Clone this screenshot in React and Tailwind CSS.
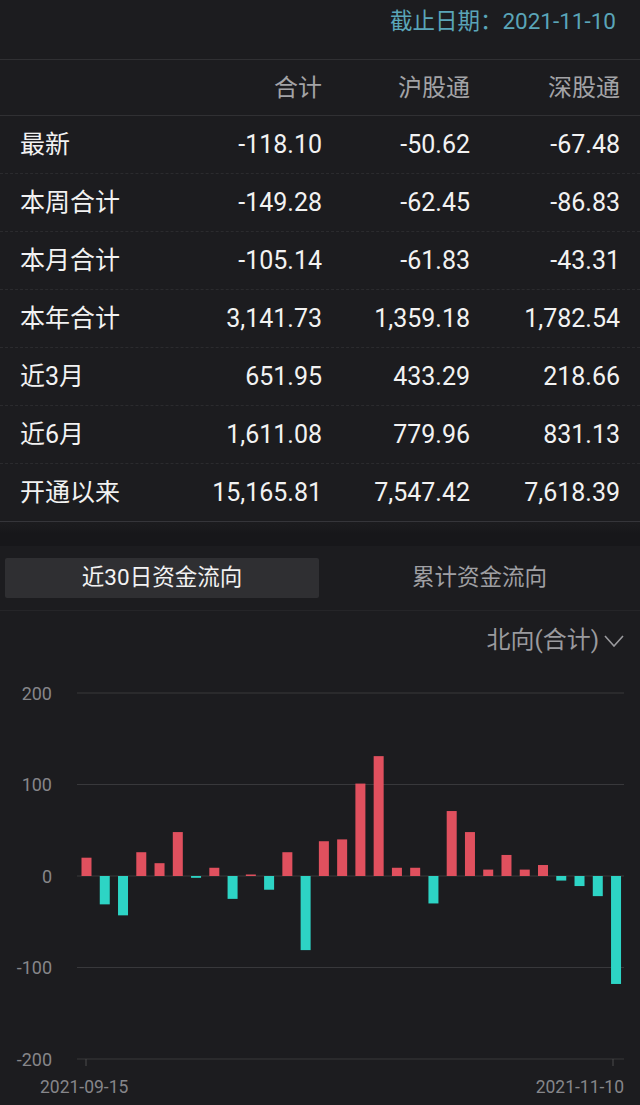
const rows = [
  ['最新', '-118.10', '-50.62', '-67.48'],
  ['本周合计', '-149.28', '-62.45', '-86.83'],
  ['本月合计', '-105.14', '-61.83', '-43.31'],
  ['本年合计', '3,141.73', '1,359.18', '1,782.54'],
  ['近3月', '651.95', '433.29', '218.66'],
  ['近6月', '1,611.08', '779.96', '831.13'],
  ['开通以来', '15,165.81', '7,547.42', '7,618.39'],
];

const flows = [
  20, -31, -43, 26, 14, 48, -2, 9, -25, 1, -15, 26, -81, 38, 40, 101, 131, 9, 9, -30,
  71, 48, 7, 23, 7, 12, -5, -11, -22, -118,
];

const font = { fontFamily: 'Roboto, "Noto Sans CJK SC", sans-serif' };

function FlowChart() {
  const zero = 206;
  const k = 0.915;
  const grid = [
    [200, 23],
    [100, 114.5],
    [0, 206],
    [-100, 297.5],
    [-200, 389],
  ];

  return (
    <svg width="640" height="435" viewBox="0 0 640 435" className="block">
      {grid.map(([label, y]) => (
        <g key={label}>
          <line x1="77" x2="624" y1={y} y2={y} stroke="#38383b" strokeWidth="1.2" />
          <text
            x="52"
            y={y}
            textAnchor="end"
            dominantBaseline="central"
            fill="#86868a"
            fontSize="18"
            style={font}
          >
            {label}
          </text>
        </g>
      ))}
      {flows.map((v, i) => {
        const cx = 86.5 + i * 18.26;
        const h = Math.max(Math.abs(v) * k, 1.5);
        const y = v >= 0 ? zero - h : zero;
        return (
          <rect
            key={i}
            x={cx - 5}
            y={y}
            width="10"
            height={h}
            fill={v >= 0 ? '#e0505e' : '#2dd4c5'}
          />
        );
      })}
      <line x1="86" x2="86" y1="389" y2="396" stroke="#4a4a4d" />
      <line x1="613" x2="613" y1="389" y2="396" stroke="#4a4a4d" />
      <text x="40" y="417" fill="#86868a" fontSize="17.5" style={font} dominantBaseline="central">
        2021-09-15
      </text>
      <text
        x="624"
        y="417"
        textAnchor="end"
        fill="#86868a"
        fontSize="17.5"
        style={font}
        dominantBaseline="central"
      >
        2021-11-10
      </text>
    </svg>
  );
}

export default function App() {
  return (
    <div className="w-[640px] h-[1105px] bg-[#1c1c1f] overflow-hidden" style={font}>
      {/* date */}
      <div className="h-[60px] flex items-center justify-end pr-[24px] pb-[15px] border-b border-[#303033]">
        <span className="text-[22.5px] text-[#5aa5b8]">截止日期：2021-11-10</span>
      </div>

      {/* table header */}
      <div className="h-[56px] grid grid-cols-[1fr_154px_148px_150px] items-center pl-[20px] pr-[20px] border-b border-[#303033] text-[24px] text-[#a3a3a6]">
        <span />
        <span className="text-right">合计</span>
        <span className="text-right">沪股通</span>
        <span className="text-right">深股通</span>
      </div>

      {/* table body */}
      {rows.map((r, i) => (
        <div
          key={r[0]}
          className={`h-[58px] grid grid-cols-[1fr_154px_148px_150px] items-center pl-[20px] pr-[20px] text-[25px] text-[#f2f2f2] ${
            i === rows.length - 1 ? 'border-b border-[#35353a]' : 'border-b border-dashed border-[#2b2b2e]'
          }`}
        >
          <span>{r[0]}</span>
          <span className="text-right">{r[1]}</span>
          <span className="text-right">{r[2]}</span>
          <span className="text-right">{r[3]}</span>
        </div>
      ))}

      {/* divider band */}
      <div className="h-[24px] bg-gradient-to-b from-[#1c1c1f] via-[#17171a] to-[#17171a]" />

      {/* tabs */}
      <div className="h-[65px] flex items-center pl-[5px] border-b border-[#252528]">
        <div className="w-[314px] h-[40px] rounded-[2px] bg-[#2f2f32] flex items-center justify-center text-[22.5px] text-[#f2f2f2]">
          近30日资金流向
        </div>
        <div className="flex-1 h-[40px] flex items-center justify-center text-[22.5px] text-[#a0a0a4]">
          累计资金流向
        </div>
      </div>

      {/* selector */}
      <div className="h-[59px] flex items-center justify-end pr-[16px] pb-[2px] text-[24px] text-[#9a9a9e]">
        <span>北向(合计)</span>
        <svg width="20" height="12" viewBox="0 0 20 12" className="ml-[5px] mt-[2px]" fill="none">
          <polyline points="1,1 10,11 19,1" stroke="#9a9a9e" strokeWidth="1.6" />
        </svg>
      </div>

      <FlowChart />
    </div>
  );
}
